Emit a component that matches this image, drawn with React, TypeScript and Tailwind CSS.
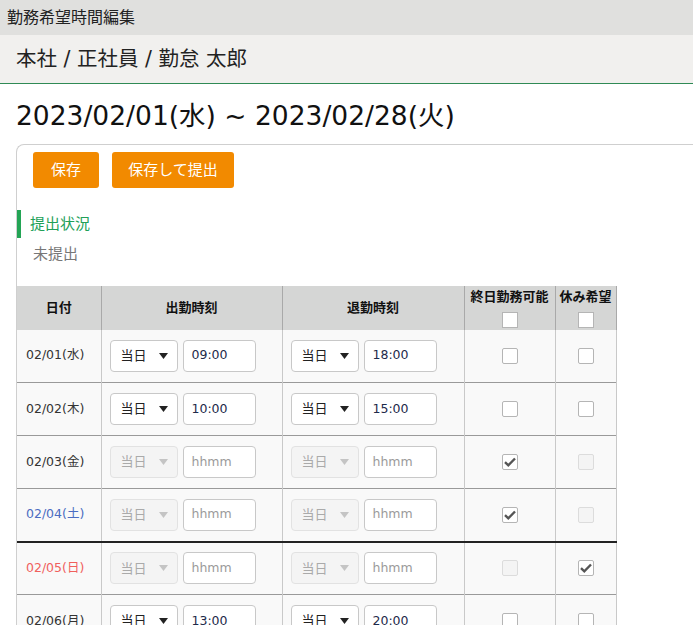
import React from 'react';

type Row = {
  date: string;
  kind: 'weekday' | 'sat' | 'sun';
  start?: string;
  end?: string;
  allDay: boolean;
  off: boolean;
  weekEnd?: boolean;
};

const rows: Row[] = [
  { date: '02/01(水)', kind: 'weekday', start: '09:00', end: '18:00', allDay: false, off: false },
  { date: '02/02(木)', kind: 'weekday', start: '10:00', end: '15:00', allDay: false, off: false },
  { date: '02/03(金)', kind: 'weekday', allDay: true, off: false },
  { date: '02/04(土)', kind: 'sat', allDay: true, off: false, weekEnd: true },
  { date: '02/05(日)', kind: 'sun', allDay: false, off: true },
  { date: '02/06(月)', kind: 'weekday', start: '13:00', end: '20:00', allDay: false, off: false },
];

const dateColor = {
  weekday: 'text-[#333]',
  sat: 'text-[#4b6cc1]',
  sun: 'text-[#f0605d]',
};

const DaySelect = ({ disabled }: { disabled: boolean }) => (
  <div
    className={
      'flex h-[32px] w-[68px] items-center justify-between rounded-[4px] border pl-[10px] pr-[9px] text-[13px] ' +
      (disabled ? 'border-[#e2e2e2] bg-[#f4f4f4] text-[#aaa]' : 'border-[#c8c8c8] bg-white text-[#222]')
    }
  >
    <span>当日</span>
    <svg width="9" height="6" viewBox="0 0 9 6">
      <path d="M0 0 H9 L4.5 6 Z" fill={disabled ? '#c4c4c4' : '#222'} />
    </svg>
  </div>
);

const TimeInput = ({ value }: { value?: string }) => (
  <div className="flex h-[32px] w-[73px] items-center rounded-[4px] border border-[#c8c8c8] bg-white pl-[8px] text-[12.5px]">
    {value ? <span className="text-[#1e2a4a]">{value}</span> : <span className="text-[#9a9a9a]">hhmm</span>}
  </div>
);

const Check = ({ checked, disabled }: { checked: boolean; disabled?: boolean }) => (
  <span
    className={
      'inline-flex h-[16px] w-[16px] items-center justify-center rounded-[2px] border ' +
      (disabled ? 'border-[#dcdcdc] bg-[#f4f4f4]' : 'border-[#b5b5b5] bg-white')
    }
  >
    {checked && (
      <svg width="12" height="10" viewBox="0 0 12 10">
        <path d="M1 5.2 L4.3 8.3 L11 1.5" fill="none" stroke="#555" strokeWidth="2.4" />
      </svg>
    )}
  </span>
);

const TimeCell = ({ value, disabled }: { value?: string; disabled: boolean }) => (
  <td className="border-l border-[#c9c9c9] px-[8px]">
    <div className="flex items-center gap-[5px]">
      <DaySelect disabled={disabled} />
      <TimeInput value={value} />
    </div>
  </td>
);

export default function App() {
  return (
    <div
      className="h-[625px] w-[693px] overflow-hidden bg-white text-[#222]"
      style={{ fontFamily: '"DejaVu Sans", "Noto Sans CJK JP", sans-serif' }}
    >
      {/* page title bar */}
      <div className="flex h-[35px] items-center bg-[#e0e0de] pl-[7px] text-[16px] text-[#222]">勤務希望時間編集</div>

      {/* breadcrumb */}
      <div className="flex h-[49px] items-center border-b border-[#2f8a55] bg-[#f1f0ee] pl-[16px] text-[20.5px] text-[#222]">
        本社 / 正社員 / 勤怠 太郎
      </div>

      <h1 className="pl-[16px] pt-[14px] text-[26.5px] leading-[36px] text-[#111]">2023/02/01(水) ~ 2023/02/28(火)</h1>

      <div className="ml-[16px] mt-[10px] w-[720px] rounded-tl-[8px] border-l border-t border-[#cfcfcf]">
        <div className="flex gap-[13px] pl-[16px] pt-[7px]">
          <button className="h-[36px] w-[66px] rounded-[3px] bg-[#f28a00] text-[15px] text-white">保存</button>
          <button className="h-[36px] w-[122px] rounded-[3px] bg-[#f28a00] text-[15px] text-white">保存して提出</button>
        </div>

        <div className="mt-[22px] flex h-[28px] items-center border-l-[4px] border-[#23a455] pl-[9px] text-[15px] text-[#21a058]">
          提出状況
        </div>
        <div className="pl-[16px] pt-[5px] text-[15px] text-[#777]">未提出</div>

        <table className="mt-[20px] w-[599px] table-fixed border-collapse text-[12.5px]">
          <colgroup>
            <col className="w-[84px]" />
            <col className="w-[181px]" />
            <col className="w-[182px]" />
            <col className="w-[91px]" />
            <col className="w-[61px]" />
          </colgroup>
          <thead>
            <tr className="h-[44px] bg-[#d5d6d5] text-[13px] font-bold text-[#111]">
              <th className="font-bold">日付</th>
              <th className="border-l border-[#a9a9a9] font-bold">出勤時刻</th>
              <th className="border-l border-[#a9a9a9] font-bold">退勤時刻</th>
              <th className="border-l border-[#a9a9a9] align-top pt-[2px] font-bold">
                <div className="leading-[18px]">終日勤務可能</div>
                <div className="mt-[6px] flex justify-center">
                  <span className="h-[16px] w-[16px] border border-[#b5b5b5] bg-white" />
                </div>
              </th>
              <th className="border-l border-r border-[#a9a9a9] align-top pt-[2px] font-bold">
                <div className="leading-[18px]">休み希望</div>
                <div className="mt-[6px] flex justify-center">
                  <span className="h-[16px] w-[16px] border border-[#b5b5b5] bg-white" />
                </div>
              </th>
            </tr>
          </thead>
          <tbody>
            {rows.map((r) => {
              const fixed = r.allDay || r.off;
              return (
                <tr
                  key={r.date}
                  className={
                    'h-[53px] bg-[#f9f9f9] ' +
                    (r.weekEnd ? 'border-b-2 border-b-[#222]' : 'border-b border-b-[#9a9a9a]')
                  }
                >
                  <td className={'pl-[9px] ' + dateColor[r.kind]}>{r.date}</td>
                  <TimeCell value={r.start} disabled={fixed} />
                  <TimeCell value={r.end} disabled={fixed} />
                  <td className="border-l border-[#c9c9c9] text-center">
                    <div className="flex justify-center">
                      <Check checked={r.allDay} disabled={r.off} />
                    </div>
                  </td>
                  <td className="border-l border-r border-[#c9c9c9] text-center">
                    <div className="flex justify-center">
                      <Check checked={r.off} disabled={r.allDay} />
                    </div>
                  </td>
                </tr>
              );
            })}
          </tbody>
        </table>
      </div>
    </div>
  );
}
